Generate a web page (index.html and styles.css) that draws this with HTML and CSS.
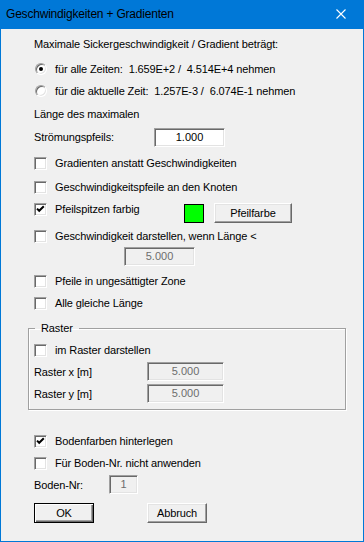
FILE: index.html
```html
<!DOCTYPE html>
<html lang="de">
<head>
  <meta charset="UTF-8" />
  <title>Geschwindigkeiten + Gradienten</title>
  <link rel="stylesheet" href="styles.css">
</head>
<body>
  <div class="dialog">
    <div class="titlebar">
      <span class="title">Geschwindigkeiten + Gradienten</span>
      <span class="close">
        <svg width="10" height="10" viewBox="0 0 10 10"><path d="M0.5 0.5 L9.5 9.5 M9.5 0.5 L0.5 9.5" stroke="#fff" stroke-width="1.1" fill="none"/></svg>
      </span>
    </div>

    <div class="content">
      <div class="row r1">Maximale Sickergeschwindigkeit / Gradient beträgt:</div>

      <div class="row r2 opt"><span class="radio on"></span><span class="pre">für alle Zeiten:  1.659E+2 /  4.514E+4 nehmen</span></div>
      <div class="row r3 opt"><span class="radio"></span><span class="pre">für die aktuelle Zeit:  1.257E-3 /  6.074E-1 nehmen</span></div>

      <div class="row r4">Länge des maximalen</div>
      <div class="row r5">
        <span class="lbl w-stroem">Strömungspfeils:</span>
        <span class="field w71">1.000</span>
      </div>

      <div class="row r6 opt"><span class="check"></span>Gradienten anstatt Geschwindigkeiten</div>
      <div class="row r7 opt"><span class="check"></span>Geschwindigkeitspfeile an den Knoten</div>

      <div class="row r8 colorrow">
        <div class="opt tight w-farbig"><span class="check on"><svg width="9" height="9" viewBox="0 0 9 9"><path d="M1 3.6 L3.2 5.8 L7.8 1.2" stroke="#000" stroke-width="2" fill="none"/></svg></span>Pfeilspitzen farbig</div>
        <span class="swatch"></span>
        <span class="btn w78">Pfeilfarbe</span>
      </div>

      <div class="row r9 opt"><span class="check"></span>Geschwindigkeit darstellen, wenn Länge &lt;</div>
      <div class="row r10"><span class="field disabled w71 ind90">5.000</span></div>

      <div class="row r11 opt"><span class="check"></span>Pfeile in ungesättigter Zone</div>
      <div class="row r12 opt"><span class="check"></span>Alle gleiche Länge</div>

      <fieldset class="group">
        <legend>Raster</legend>
        <div class="row g1 opt"><span class="check"></span>im Raster darstellen</div>
        <div class="row g2">
          <span class="lbl w-raster">Raster x [m]</span>
          <span class="field disabled w77">5.000</span>
        </div>
        <div class="row g3">
          <span class="lbl w-raster">Raster y [m]</span>
          <span class="field disabled w77">5.000</span>
        </div>
      </fieldset>

      <div class="row b1 opt"><span class="check on"><svg width="9" height="9" viewBox="0 0 9 9"><path d="M1 3.6 L3.2 5.8 L7.8 1.2" stroke="#000" stroke-width="2" fill="none"/></svg></span>Bodenfarben hinterlegen</div>
      <div class="row b2 opt"><span class="check"></span>Für Boden-Nr. nicht anwenden</div>
      <div class="row b3">
        <span class="lbl w-boden">Boden-Nr:</span>
        <span class="field disabled w29">1</span>
      </div>

      <div class="row b4 buttons">
        <span class="btn default w60">OK</span>
        <span class="btn w60">Abbruch</span>
      </div>
    </div>
  </div>
</body>
</html>
```

FILE: styles.css
```css
* {
  box-sizing: border-box;
}
body {
  margin: 0;
  background: #f0f0f0;
  font-family: "Liberation Sans", Arial, sans-serif;
  font-size: 11px;
  letter-spacing: -0.12px;
  color: #000;
}
.dialog {
  width: 364px;
  height: 542px;
  border: 1px solid #0078d7;
  border-top: none;
  background: #f0f0f0;
}
.titlebar {
  height: 29px;
  margin: 0 -1px;
  background: #0078d7;
  display: flex;
  align-items: center;
  justify-content: space-between;
}
.title {
  padding-left: 6px;
  font-size: 12px;
  letter-spacing: -0.2px;
  color: #000;
  margin-top: -2px;
}
.close {
  width: 46px;
  display: flex;
  justify-content: center;
  margin-top: -2px;
}
.close svg {
  display: block;
}
.content {
  padding-left: 33px;
}
.row {
  height: 20px;
  line-height: 20px;
  display: flex;
  align-items: center;
  white-space: nowrap;
}
.pre {
  white-space: pre;
}
.opt .radio,
.opt .check {
  margin-right: 8px;
}

/* vertical rhythm */
.r1 { margin-top: 5px; }
.r2 { margin-top: 5px; }
.r3 { margin-top: 2px; }
.r4 { margin-top: 3px; }
.r5 { margin-top: 3px; }
.r6 { margin-top: 6px; }
.r7 { margin-top: 4px; }
.r8 { margin-top: 6px; align-items: flex-start; }
.r9 { margin-top: 3px; }
.r10 { margin-top: 1px; height: 19px; }
.r11 { margin-top: 5px; }
.r12 { margin-top: 2px; }
.g1 { margin-top: 5px; }
.g2 { margin-top: 2px; height: 19px; }
.g3 { margin-top: 3px; height: 19px; }
.b1 { margin-top: 21px; }
.b2 { margin-top: 2px; }
.b3 { margin-top: 2px; height: 19px; }
.b4 { margin-top: 9px; }

/* controls */
.radio {
  width: 12px;
  height: 12px;
  border-radius: 50%;
  background: #fff;
  border: 1px solid;
  border-color: #a0a0a0 #fff #fff #a0a0a0;
  box-shadow: inset 1px 1px 0 #696969, inset -1px -1px 0 #e3e3e3;
  display: flex;
  align-items: center;
  justify-content: center;
  flex: none;
  margin-left: 1px;
}
.radio.on::after {
  content: "";
  width: 4px;
  height: 4px;
  border-radius: 50%;
  background: #000;
}
.check {
  width: 13px;
  height: 13px;
  background: #fff;
  border: 1px solid;
  border-color: #a0a0a0 #fff #fff #a0a0a0;
  box-shadow: inset 1px 1px 0 #696969, inset -1px -1px 0 #e3e3e3;
  display: flex;
  align-items: center;
  justify-content: center;
  flex: none;
}
.check svg {
  display: block;
}
.field {
  height: 19px;
  background: #fff;
  border: 1px solid;
  border-color: #a0a0a0 #fff #fff #a0a0a0;
  box-shadow: inset 1px 1px 0 #696969, inset -1px -1px 0 #e3e3e3;
  text-align: center;
  line-height: 17px;
  font-size: 11px;
  letter-spacing: 0;
}
.field.disabled {
  background: #f0f0f0;
  color: #6d6d6d;
}
.btn {
  height: 20px;
  background: #f0f0f0;
  border: 1px solid;
  border-color: #fff #696969 #696969 #fff;
  box-shadow: inset -1px -1px 0 #a0a0a0, inset 1px 1px 0 #e3e3e3;
  text-align: center;
  line-height: 18px;
  font-size: 11px;
}
.btn.default {
  border-color: #000;
  box-shadow: inset 1px 1px 0 #fff, inset -1px -1px 0 #696969, inset -2px -2px 0 #a0a0a0;
}
.swatch {
  width: 20px;
  height: 19px;
  background: #00ff00;
  border: 1px solid #000;
  margin-top: 1px;
}

/* colour row */
.colorrow .tight {
  height: 13px;
  line-height: 13px;
  display: flex;
  align-items: center;
}
.w-farbig { width: 150px; }
.colorrow .btn { margin-left: 10px; }

/* widths */
.w29 { width: 29px; }
.w60 { width: 60px; }
.w71 { width: 71px; }
.w77 { width: 77px; }
.w78 { width: 78px; }
.ind90 { margin-left: 90px; }
.w-stroem { width: 120px; }
.w-raster { width: 113px; }
.w-boden { width: 75px; }

/* group box */
.group {
  margin: 8px 0 0 -6px;
  width: 318px;
  padding: 0 5px 6px 5px;
  border: 1px solid #a0a0a0;
  box-shadow: 1px 1px 0 #fff, inset 1px 1px 0 #fff;
}
.group legend {
  margin-left: 1px;
  padding: 0 6px;
  line-height: 14px;
}

.buttons .btn + .btn {
  margin-left: 53px;
}
```
